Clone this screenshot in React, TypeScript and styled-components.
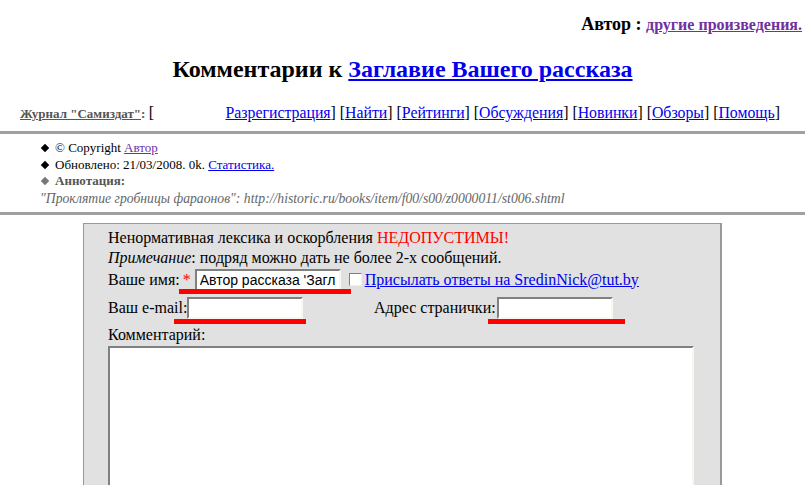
import * as React from 'react';
import styled, { createGlobalStyle } from 'styled-components';

const GlobalStyle = createGlobalStyle`
  html, body {
    margin: 0;
    padding: 0;
    background: #ffffff;
    font-family: "Liberation Serif", "Times New Roman", serif;
    color: #000000;
  }
`;

const Page = styled.div`
  width: 805px;
  height: 485px;
  overflow: hidden;
`;

const AuthorLine = styled.div`
  text-align: right;
  padding: 13px 3px 0 0;
  font-size: 18px;
  font-weight: bold;
  line-height: 22px;
`;

const VisitedLink = styled.a<{ $size?: number }>`
  color: #7030a0;
  font-size: ${(p) => p.$size ?? 16}px;
`;

const Title = styled.h2`
  margin: 20px 0 0;
  text-align: center;
  font-size: 24px;
  font-weight: bold;
`;

const BlueLink = styled.a`
  color: #0000ee;
`;

const NavRow = styled.div`
  display: flex;
  justify-content: space-between;
  align-items: baseline;
  padding: 21px 25px 0 20px;
  font-size: 15.8px;
`;

const MagTitle = styled.span`
  font-size: 13px;
  font-weight: bold;
  color: #555555;
  a {
    color: #555555;
  }
`;

const Bracket = styled.span`
  font-size: 16px;
  font-weight: normal;
  color: #000000;
`;

const NavLinks = styled.span`
  color: #000000;
`;

const Rule = styled.div<{ $top: number }>`
  margin-top: ${(p) => p.$top}px;
  height: 3px;
  background: #a0a0a0;
`;

const InfoList = styled.ul`
  margin: 6px 0 0;
  padding: 0 0 0 55px;
  font-size: 13px;
  line-height: 16.5px;
`;

const InfoItem = styled.li<{ $grey?: boolean }>`
  list-style: none;
  position: relative;
  color: ${(p) => (p.$grey ? '#555555' : '#000000')};
  &::before {
    content: '';
    position: absolute;
    left: -13px;
    top: 5px;
    width: 6px;
    height: 6px;
    background: ${(p) => (p.$grey ? '#777777' : '#000000')};
    transform: rotate(45deg);
  }
`;

const Annotation = styled.div`
  padding-left: 40px;
  font-size: 13.7px;
  font-style: italic;
  color: #666666;
  line-height: 17px;
`;

const FormBox = styled.div`
  position: relative;
  width: 612px;
  margin: 8px auto 0;
  padding: 4px 0 0 24px;
  height: 400px;
  background: #e1e1e1;
  border: 1px solid #999999;
  border-right: 2px solid #999999;
  font-size: 16px;
  line-height: 20px;
`;

const Line = styled.div<{ $top?: number }>`
  display: flex;
  align-items: center;
  white-space: nowrap;
  margin-top: ${(p) => p.$top ?? 0}px;
`;

const Red = styled.span`
  color: #ff0000;
  margin: 0 4px 0 3px;
`;

const Warn = styled.span`
  color: #ff0000;
  margin-left: 4px;
`;

const TextInput = styled.input<{ $w: number; $gap?: number }>`
  width: ${(p) => p.$w}px;
  height: 22px;
  box-sizing: border-box;
  margin: 0 0 0 ${(p) => p.$gap ?? 0}px;
  padding: 1px 3px;
  border: 2px solid #f8f8f0;
  border-top-color: #808080;
  border-left-color: #808080;
  background: #ffffff;
  font-family: "Liberation Sans", Arial, sans-serif;
  font-size: 14px;
  color: #000000;
  outline: none;
`;

const Check = styled.span`
  display: inline-block;
  width: 13px;
  height: 13px;
  box-sizing: border-box;
  margin: 0 3px 0 8px;
  background: #ffffff;
  border: 1px solid #808080;
  border-right-color: #f0f0f0;
  border-bottom-color: #f0f0f0;
`;

const Cell = styled.span<{ $w?: number }>`
  display: flex;
  align-items: center;
  width: ${(p) => (p.$w ? `${p.$w}px` : 'auto')};
`;

const CommentArea = styled.div`
  margin-top: 1px;
  width: 586px;
  height: 200px;
  box-sizing: border-box;
  background: #ffffff;
  border: 2px solid #808080;
  border-right-color: #f8f8f0;
  border-bottom-color: #f8f8f0;
`;

const Mark = styled.div<{ $x: number; $y: number; $w: number }>`
  position: absolute;
  left: ${(p) => p.$x}px;
  top: ${(p) => p.$y}px;
  width: ${(p) => p.$w}px;
  height: 5px;
  background: #ff0000;
`;

export default function App() {
  return (
    <Page>
      <GlobalStyle />
      <AuthorLine>
        Автор : <VisitedLink href="#">другие произведения.</VisitedLink>
      </AuthorLine>
      <Title>
        Комментарии к <BlueLink href="#">Заглавие Вашего рассказа</BlueLink>
      </Title>
      <NavRow>
        <MagTitle>
          <a href="#">Журнал "Самиздат"</a>: <Bracket>[</Bracket>
        </MagTitle>
        <NavLinks>
          <BlueLink href="#">Разрегистрация</BlueLink>] [<BlueLink href="#">Найти</BlueLink>] [
          <BlueLink href="#">Рейтинги</BlueLink>] [<BlueLink href="#">Обсуждения</BlueLink>] [
          <BlueLink href="#">Новинки</BlueLink>] [<BlueLink href="#">Обзоры</BlueLink>] [
          <BlueLink href="#">Помощь</BlueLink>]
        </NavLinks>
      </NavRow>
      <Rule $top={9} />
      <InfoList>
        <InfoItem>
          © Copyright <VisitedLink href="#" $size={13}>Автор</VisitedLink>
        </InfoItem>
        <InfoItem>
          Обновлено: 21/03/2008. 0k. <BlueLink href="#">Статистика.</BlueLink>
        </InfoItem>
        <InfoItem $grey>
          <b>Аннотация:</b>
        </InfoItem>
      </InfoList>
      <Annotation>"Проклятие гробницы фараонов": http://historic.ru/books/item/f00/s00/z0000011/st006.shtml</Annotation>
      <Rule $top={5} />
      <FormBox>
        <Line>
          Ненормативная лексика и оскорбления<Warn>НЕДОПУСТИМЫ!</Warn>
        </Line>
        <Line>
          <i>Примечание</i>: подряд можно дать не более 2-х сообщений.
        </Line>
        <Line $top={1}>
          Ваше имя:<Red>*</Red>
          <TextInput $w={146} defaultValue="Автор рассказа 'Заглавие Вашего рассказа'" />
          <Check />
          <BlueLink href="#">Присылать ответы на SredinNick@tut.by</BlueLink>
        </Line>
        <Line $top={6}>
          <Cell $w={266}>
            Ваш e-mail:
            <TextInput $w={116} />
          </Cell>
          <Cell>
            Адрес странички:
            <TextInput $w={116} $gap={1} />
          </Cell>
        </Line>
        <Line $top={6}>Комментарий:</Line>
        <CommentArea />
        <Mark $x={95} $y={65} $w={172} />
        <Mark $x={90} $y={95} $w={132} />
        <Mark $x={404} $y={95} $w={137} />
      </FormBox>
    </Page>
  );
}
